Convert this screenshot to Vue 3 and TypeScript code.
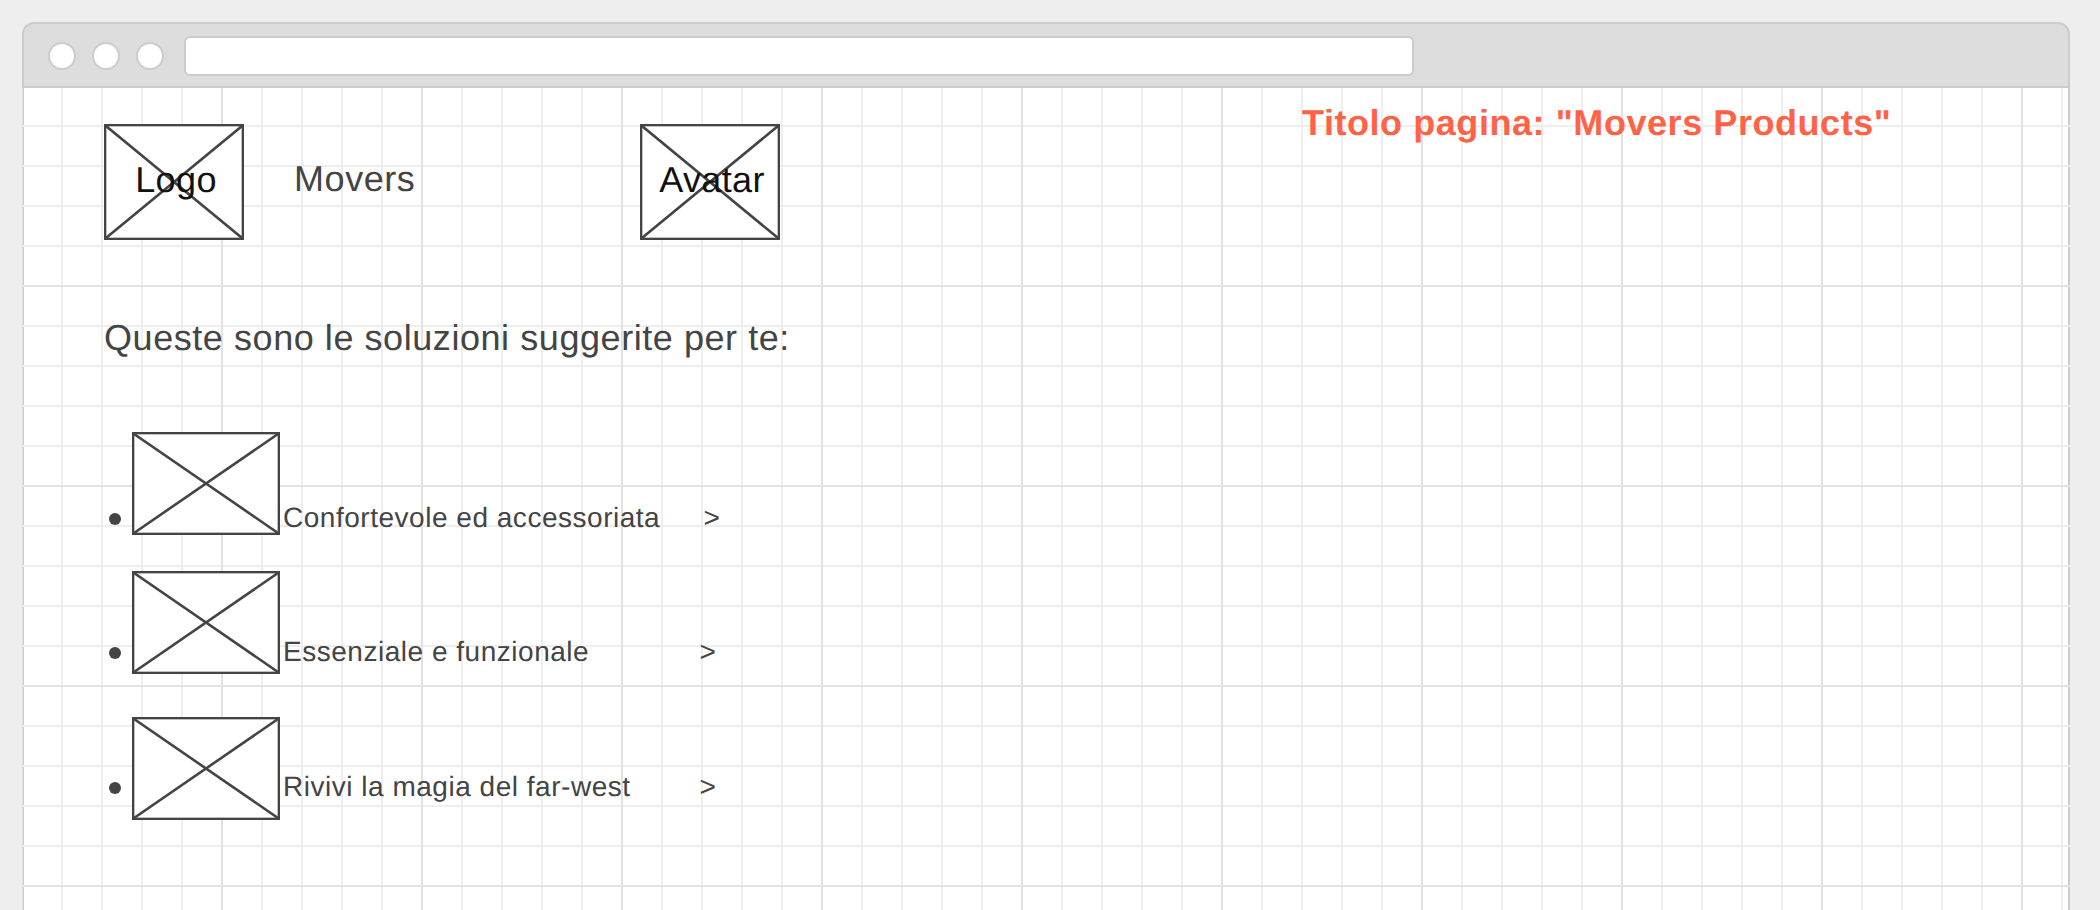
<script setup lang="ts">
const items = [
  { text: 'Confortevole ed accessoriata', cls: 'first' },
  { text: 'Essenziale e funzionale', cls: 'second' },
  { text: 'Rivivi la magia del far-west', cls: 'third' },
]
</script>

<template>
  <div class="window">
    <div class="chrome">
      <span class="dot" />
      <span class="dot" />
      <span class="dot" />
      <div class="address" />
    </div>
    <div class="page">
      <div class="top">
        <div class="ph logo">
          <svg viewBox="0 0 100 100" preserveAspectRatio="none">
            <line x1="0" y1="0" x2="100" y2="100" vector-effect="non-scaling-stroke" />
            <line x1="100" y1="0" x2="0" y2="100" vector-effect="non-scaling-stroke" />
          </svg>
          <span>Logo</span>
        </div>
        <div class="brand">Movers</div>
        <div class="ph avatar">
          <svg viewBox="0 0 100 100" preserveAspectRatio="none">
            <line x1="0" y1="0" x2="100" y2="100" vector-effect="non-scaling-stroke" />
            <line x1="100" y1="0" x2="0" y2="100" vector-effect="non-scaling-stroke" />
          </svg>
          <span>Avatar</span>
        </div>
        <h1 class="title">Titolo pagina: "Movers Products"</h1>
      </div>

      <h2 class="lead">Queste sono le soluzioni suggerite per te:</h2>

      <ul class="list">
        <li v-for="item in items" :key="item.text" class="row" :class="item.cls">
          <span class="bullet" />
          <div class="ph thumb">
            <svg viewBox="0 0 100 100" preserveAspectRatio="none">
              <line x1="0" y1="0" x2="100" y2="100" vector-effect="non-scaling-stroke" />
              <line x1="100" y1="0" x2="0" y2="100" vector-effect="non-scaling-stroke" />
            </svg>
          </div>
          <span class="label">{{ item.text }}</span>
          <span class="arrow">&gt;</span>
        </li>
      </ul>
    </div>
  </div>
</template>

<style>
html, body {
  margin: 0;
  height: 910px;
  overflow: hidden;
  background: #eeeeee;
}
</style>

<style scoped>
.window {
  box-sizing: border-box;
  width: 2048px;
  height: 888px;
  margin: 22px 0 0 22px;
  display: flex;
  flex-direction: column;
  font-family: "Liberation Sans", Arial, sans-serif;
  color: #444;
  letter-spacing: 0.56px;
  text-rendering: geometricPrecision;
}
.chrome {
  box-sizing: border-box;
  height: 66px;
  flex: none;
  display: flex;
  align-items: center;
  padding: 2px 0 0 24px;
  background: #dddddd;
  border: 2px solid #cccccc;
  border-radius: 12px 12px 0 0;
}
.dot {
  box-sizing: border-box;
  width: 28px;
  height: 28px;
  margin-right: 16px;
  border-radius: 50%;
  background: #fff;
  border: 2px solid #ccc;
}
.address {
  box-sizing: border-box;
  width: 1230px;
  height: 40px;
  margin-left: 4px;
  background: #fff;
  border: 2px solid #ccc;
  border-radius: 6px;
}
.page {
  flex: 1;
  padding: 12px 0 0 82px;
  background-color: #fff;
  background-image:
    linear-gradient(to right, #e2e2e2 2px, transparent 2px),
    linear-gradient(to bottom, #e2e2e2 2px, transparent 2px),
    linear-gradient(to right, #eeeeee 2px, transparent 2px),
    linear-gradient(to bottom, #eeeeee 2px, transparent 2px),
    linear-gradient(to right, #cccccc 2px, transparent 2px),
    linear-gradient(to left, #cccccc 2px, transparent 2px);
  background-size:
    200px 100%,
    100% 200px,
    40px 100%,
    100% 40px,
    100% 100%,
    100% 100%;
  background-position:
    199px 0,
    0 197px,
    39px 0,
    0 37px,
    0 0,
    0 0;
}
.top {
  display: flex;
  align-items: flex-start;
}
.ph {
  box-sizing: border-box;
  position: relative;
  flex: none;
  display: flex;
  align-items: center;
  justify-content: center;
  background: #fff;
  border: 2px solid #444;
  box-shadow: inset 0 0 0 1px rgba(68, 68, 68, 0.35);
}
.ph svg {
  position: absolute;
  inset: 0;
  width: 100%;
  height: 100%;
}
.ph line {
  stroke: #444;
  stroke-width: 2.6;
}
.ph span {
  position: relative;
  font-size: 36px;
  letter-spacing: 0.36px;
  color: #111;
  margin: -4px 0 0 4px;
}
.logo,
.avatar {
  width: 140px;
  height: 116px;
  margin-top: 24px;
}
.brand {
  width: 346px;
  margin: 56px 0 0 50px;
  font-size: 36px;
  line-height: 46px;
}
.title {
  margin: 0 0 0 522px;
  font-size: 36px;
  line-height: 46px;
  font-weight: 700;
  color: #ff6347;
}
.lead {
  margin: 75px 0 0;
  font-size: 36px;
  line-height: 46px;
  font-weight: 400;
}
.list {
  list-style: none;
  margin: 0;
  padding: 0;
}
.row {
  display: flex;
  align-items: flex-start;
}
.first { margin-top: 71px; --drop: 68px; }
.second { margin-top: 35px; --drop: 63px; }
.third { margin-top: 43px; --drop: 52px; }
.bullet {
  flex: none;
  width: 12px;
  height: 12px;
  margin: calc(var(--drop) + 13px) 11px 0 5px;
  border-radius: 50%;
  background: #444;
}
.thumb {
  width: 148px;
  height: 103px;
}
.label,
.arrow {
  margin-top: var(--drop);
  font-size: 28px;
  line-height: 36px;
  letter-spacing: 0.52px;
}
.label {
  margin-left: 3px;
  width: 416.5px;
}
.first .label { width: 420.5px; }
</style>
